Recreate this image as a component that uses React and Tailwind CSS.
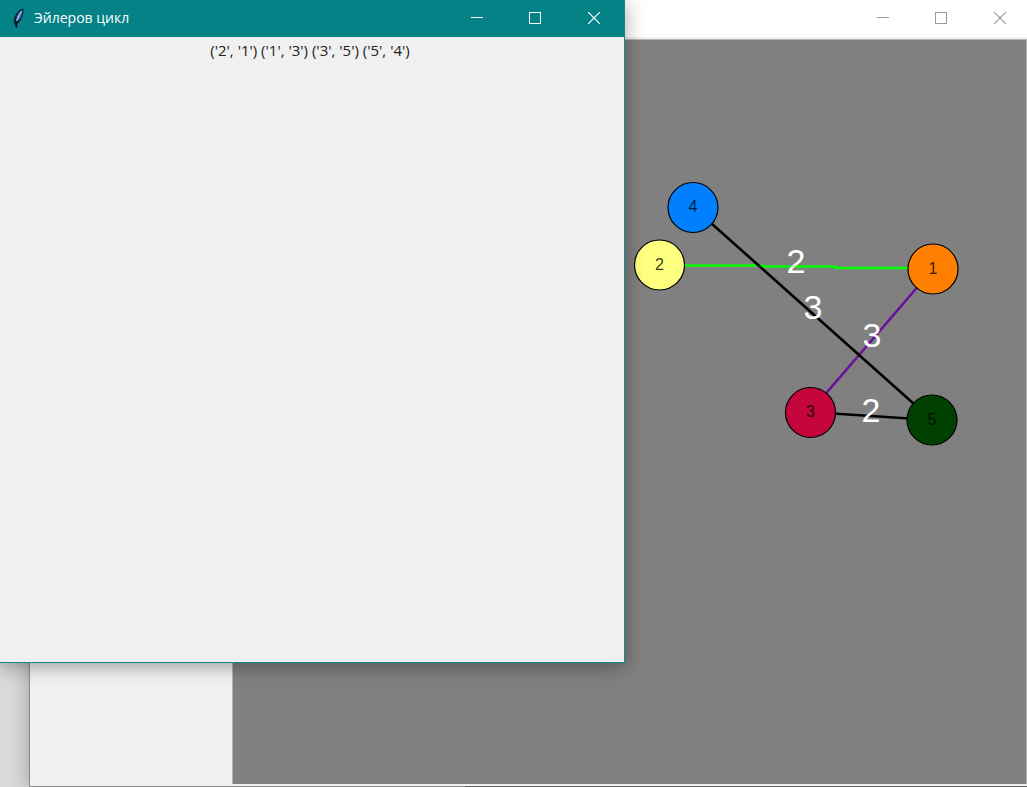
import React from "react";

const nodes = [
  { id: "4", x: 460, y: 167.5, fill: "#0080ff" },
  { id: "2", x: 426.5, y: 225, fill: "#ffff80" },
  { id: "1", x: 700, y: 229, fill: "#ff8000" },
  { id: "3", x: 577.5, y: 372.5, fill: "#c4063c" },
  { id: "5", x: 699, y: 380, fill: "#004000" },
];

const edges = [
  { points: "426,225.5 529,225.5 529,226.5 602,226.5 602,228 700,228", stroke: "#00ff00" },
  { points: "700,229 577,372", stroke: "#6b0f9c" },
  { points: "577,372 699,380", stroke: "#000000" },
  { points: "460,167 699,380", stroke: "#000000" },
];

const weights = [
  { value: "2", x: 563, y: 233 },
  { value: "3", x: 580, y: 279 },
  { value: "3", x: 639, y: 307 },
  { value: "2", x: 638, y: 382 },
];

function Feather() {
  return (
    <svg viewBox="0 0 16 20" className="h-5 w-4" aria-hidden="true">
      <path d="M13.5 1 L10 2 L6.5 5.5 L4.5 10 L4 15 L6.5 19.5 L7.2 16 L10.3 12.5 L12.5 7.5 Z" fill="#101c2c" stroke="#06343a" strokeWidth=".6" />
      <path d="M12.6 2.2 L9.5 4.3 L7 8 L6 13.4 L9.2 11.6 L11.3 7.5 Z" fill="#4f80cc" />
      <path d="M12 2.8 L8.8 7.5 L6.8 13" fill="none" stroke="#b7cee8" strokeWidth="1" />
      <path d="M6.5 13.5 V19.5" stroke="#06151c" strokeWidth="1.4" />
    </svg>
  );
}

function Controls({ className }) {
  return (
    <div className={`flex ${className}`}>
      <button aria-label="Свернуть" className="flex h-9 w-[58px] items-center justify-center">
        <svg className="h-3 w-3" viewBox="0 0 12 12">
          <path d="M0 5.5H12" stroke="currentColor" />
        </svg>
      </button>
      <button aria-label="Развернуть" className="flex h-9 w-[58px] items-center justify-center">
        <svg className="h-3 w-3" viewBox="0 0 12 12">
          <rect x=".5" y=".5" width="11" height="11" fill="none" stroke="currentColor" />
        </svg>
      </button>
      <button aria-label="Закрыть" className="flex h-9 w-[60px] items-center justify-center">
        <svg className="h-3 w-3" viewBox="0 0 12 12">
          <path d="M0 0L12 12M12 0L0 12" stroke="currentColor" strokeWidth="1.2" />
        </svg>
      </button>
    </div>
  );
}

function Graph() {
  return (
    <svg className="block h-full w-full font-['Liberation_Sans',sans-serif]" role="img" aria-label="Граф">
      {edges.map((e) => (
        <polyline key={e.points} points={e.points} fill="none" stroke={e.stroke} strokeWidth="2.6" />
      ))}
      {nodes.map((n) => (
        <g key={n.id}>
          <circle cx={n.x} cy={n.y} r="25" fill={n.fill} stroke="#000" strokeWidth="1.2" />
          <text x={n.x} y={Math.floor(n.y) + 5} textAnchor="middle" className="fill-black/80 text-[16px]">
            {n.id}
          </text>
        </g>
      ))}
      {weights.map((w) => (
        <text key={`${w.x}-${w.y}`} x={w.x} y={w.y} textAnchor="middle" className="fill-white text-[34px]">
          {w.value}
        </text>
      ))}
    </svg>
  );
}

export default function App() {
  return (
    <main className="relative flex h-screen overflow-hidden bg-[#d9d9d9] pl-[29px] font-['Open_Sans','Noto_Sans',sans-serif]">
      <section className="flex min-w-0 grow flex-col border-l border-[#8c8c8c] bg-[#f0f0f0] shadow-[0_0_18px_rgba(0,0,0,0.3)]">
        <header className="flex h-[37px] shrink-0 justify-end bg-white">
          <Controls className="-mr-[3px] text-[#999999]" />
        </header>
        <div className="flex min-h-0 grow pt-[2px] pb-[2px]">
          <aside className="w-[202px] shrink-0" />
          <div className="min-w-0 grow border-t border-r border-l border-[#b4b4b4] bg-[#808080]">
            <Graph />
          </div>
        </div>
        <div className="flex h-px shrink-0 bg-[#666666]">
          <div className="w-[435px] bg-[#8c8c8c]" />
        </div>
      </section>

      <section className="absolute top-0 left-0 flex h-[663px] w-[625px] flex-col border-r border-b border-[#16898c] bg-[#f0f0f0] shadow-[0_3px_18px_rgba(0,0,0,0.36)]">
        <header className="flex h-[37px] shrink-0 items-start justify-between bg-[#048286] text-white">
          <div className="flex h-9 items-center gap-2 pl-[10px]">
            <Feather />
            <h1 className="text-[14px] leading-5">Эйлеров цикл</h1>
          </div>
          <Controls className="text-white" />
        </header>
        <p className="pt-[3px] pr-1 text-center text-[15px] leading-5 text-[#222222]">
          ('2', '1') ('1', '3') ('3', '5') ('5', '4')
        </p>
      </section>
    </main>
  );
}
